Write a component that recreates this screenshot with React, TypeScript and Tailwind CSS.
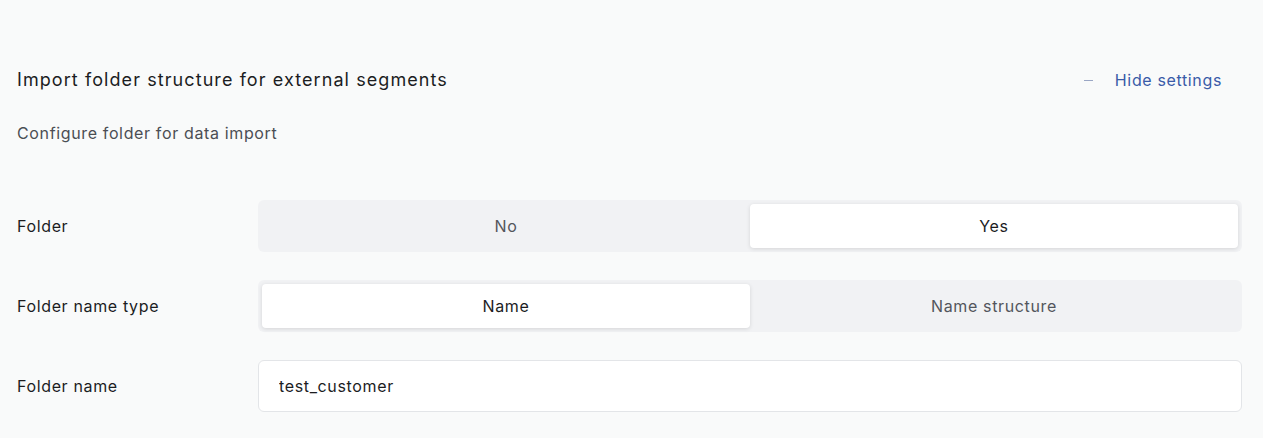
import { useState } from 'react';

// ============================================================
// Import folder settings panel
// ============================================================

type SegmentProps = {
  options: string[];
  value: string;
  onChange: (v: string) => void;
};

const Segmented = ({ options, value, onChange }: SegmentProps) => (
  <div className="flex h-[52px] w-full rounded-[6px] bg-[#f1f2f4] p-1">
    {options.map((opt) => {
      const active = opt === value;
      return (
        <button
          key={opt}
          onClick={() => onChange(opt)}
          className={
            active
              ? 'flex-1 rounded-[4px] bg-white text-[16px] tracking-[0.04em] text-[#1c1d1f] shadow-[0_1px_4px_rgba(0,0,0,0.12)]'
              : 'flex-1 rounded-[4px] text-[16px] tracking-[0.04em] text-[#53565c]'
          }
        >
          {opt}
        </button>
      );
    })}
  </div>
);

const Row = ({ label, children }: { label: string; children: React.ReactNode }) => (
  <div className="flex items-center">
    <div className="w-[241px] shrink-0 text-[16px] tracking-[0.04em] text-[#1c1d1f]">{label}</div>
    <div className="flex-1">{children}</div>
  </div>
);

const App = () => {
  const [folder, setFolder] = useState('Yes');
  const [nameType, setNameType] = useState('Name');
  const [folderName, setFolderName] = useState('test_customer');

  return (
    <div className="min-h-[438px] bg-[#f9fafa] pl-[17px] pr-[21px] pt-[66px] font-['Inter',sans-serif]">
      {/* Header */}
      <div className="flex items-center justify-between">
        <h2 className="text-[18px] leading-[28px] tracking-[0.06em] text-[#1c1d1f]">
          Import folder structure for external segments
        </h2>
        <button className="mr-5 flex items-center gap-[22px] text-[16px] tracking-[0.04em] text-[#3a5ba8]">
          <span className="block h-px w-[9px] bg-[#9aa6c4]" />
          Hide settings
        </button>
      </div>
      <p className="mt-[27px] text-[16px] leading-[24px] tracking-[0.04em] text-[#4b4e54]">
        Configure folder for data import
      </p>

      {/* Form rows */}
      <div className="mt-[55px] flex flex-col gap-[28px]">
        <Row label="Folder">
          <Segmented options={['No', 'Yes']} value={folder} onChange={setFolder} />
        </Row>
        <Row label="Folder name type">
          <Segmented
            options={['Name', 'Name structure']}
            value={nameType}
            onChange={setNameType}
          />
        </Row>
        <Row label="Folder name">
          <input
            value={folderName}
            onChange={(e) => setFolderName(e.target.value)}
            className="h-[52px] w-full rounded-[6px] border border-[#e3e5e8] bg-white px-5 text-[16px] tracking-[0.04em] text-[#1c1d1f] outline-none"
          />
        </Row>
      </div>
    </div>
  );
};

export default App;
